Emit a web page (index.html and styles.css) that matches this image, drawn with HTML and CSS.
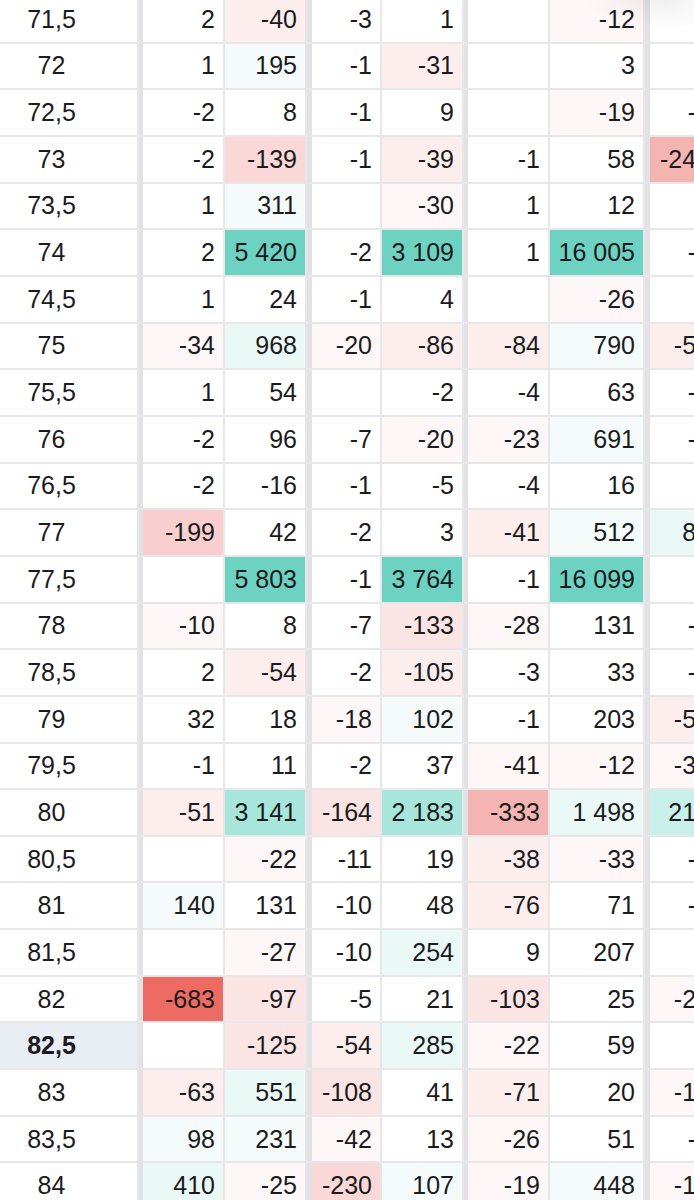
FILE: index.html
```html
<!DOCTYPE html>
<html lang="ru">
<head>
<meta charset="utf-8">
<title>Опционная доска</title>
<link rel="stylesheet" href="styles.css">
</head>
<body>
<div class="board">
  <div class="tbl">
    <div class="row"><div class="s">71,5</div><div class="c g4">2</div><div class="c r6">-40</div><div class="c n g5">-3</div><div class="c">1</div><div class="c g4"></div><div class="c w r7">-12</div><div class="c n g5"></div></div>
    <div class="row"><div class="s">72</div><div class="c g4">1</div><div class="c t5">195</div><div class="c n g5">-1</div><div class="c r6">-31</div><div class="c g4"></div><div class="c w">3</div><div class="c n g5"></div></div>
    <div class="row"><div class="s">72,5</div><div class="c g4">-2</div><div class="c">8</div><div class="c n g5">-1</div><div class="c">9</div><div class="c g4"></div><div class="c w r7">-19</div><div class="c n g5">-1</div></div>
    <div class="row"><div class="s">73</div><div class="c g4">-2</div><div class="c r4">-139</div><div class="c n g5">-1</div><div class="c r6">-39</div><div class="c g4">-1</div><div class="c w">58</div><div class="c n g5 r2">-241</div></div>
    <div class="row"><div class="s">73,5</div><div class="c g4">1</div><div class="c t5">311</div><div class="c n g5"></div><div class="c r7">-30</div><div class="c g4">1</div><div class="c w">12</div><div class="c n g5"></div></div>
    <div class="row"><div class="s">74</div><div class="c g4">2</div><div class="c t1">5 420</div><div class="c n g5">-2</div><div class="c t1">3 109</div><div class="c g4">1</div><div class="c w t1">16 005</div><div class="c n g5">-1</div></div>
    <div class="row"><div class="s">74,5</div><div class="c g4">1</div><div class="c">24</div><div class="c n g5">-1</div><div class="c">4</div><div class="c g4"></div><div class="c w r7">-26</div><div class="c n g5"></div></div>
    <div class="row"><div class="s">75</div><div class="c g4 r7">-34</div><div class="c t4">968</div><div class="c n g5 r7">-20</div><div class="c r6">-86</div><div class="c g4 r6">-84</div><div class="c w t5">790</div><div class="c n g5 r6">-52</div></div>
    <div class="row"><div class="s">75,5</div><div class="c g4">1</div><div class="c">54</div><div class="c n g5"></div><div class="c">-2</div><div class="c g4">-4</div><div class="c w">63</div><div class="c n g5">-1</div></div>
    <div class="row"><div class="s">76</div><div class="c g4">-2</div><div class="c">96</div><div class="c n g5">-7</div><div class="c r7">-20</div><div class="c g4 r7">-23</div><div class="c w t5">691</div><div class="c n g5">-2</div></div>
    <div class="row"><div class="s">76,5</div><div class="c g4">-2</div><div class="c">-16</div><div class="c n g5">-1</div><div class="c">-5</div><div class="c g4">-4</div><div class="c w">16</div><div class="c n g5"></div></div>
    <div class="row"><div class="s">77</div><div class="c g4 r3">-199</div><div class="c">42</div><div class="c n g5">-2</div><div class="c">3</div><div class="c g4 r6">-41</div><div class="c w t5">512</div><div class="c n g5 t4">84</div></div>
    <div class="row"><div class="s">77,5</div><div class="c g4"></div><div class="c t1">5 803</div><div class="c n g5">-1</div><div class="c t1">3 764</div><div class="c g4">-1</div><div class="c w t1">16 099</div><div class="c n g5"></div></div>
    <div class="row"><div class="s">78</div><div class="c g4 r7">-10</div><div class="c">8</div><div class="c n g5">-7</div><div class="c r5">-133</div><div class="c g4 r7">-28</div><div class="c w">131</div><div class="c n g5">-3</div></div>
    <div class="row"><div class="s">78,5</div><div class="c g4">2</div><div class="c r6">-54</div><div class="c n g5">-2</div><div class="c r6">-105</div><div class="c g4">-3</div><div class="c w">33</div><div class="c n g5">-1</div></div>
    <div class="row"><div class="s">79</div><div class="c g4">32</div><div class="c">18</div><div class="c n g5 r7">-18</div><div class="c t5">102</div><div class="c g4">-1</div><div class="c w">203</div><div class="c n g5 r6">-54</div></div>
    <div class="row"><div class="s">79,5</div><div class="c g4">-1</div><div class="c">11</div><div class="c n g5">-2</div><div class="c">37</div><div class="c g4 r7">-41</div><div class="c w r7">-12</div><div class="c n g5 r7">-37</div></div>
    <div class="row"><div class="s">80</div><div class="c g4 r6">-51</div><div class="c t2">3 141</div><div class="c n g5 r5">-164</div><div class="c t2">2 183</div><div class="c g4 r2">-333</div><div class="c w t4">1 498</div><div class="c n g5 t3">213</div></div>
    <div class="row"><div class="s">80,5</div><div class="c g4"></div><div class="c r7">-22</div><div class="c n g5">-11</div><div class="c">19</div><div class="c g4 r6">-38</div><div class="c w r7">-33</div><div class="c n g5">-2</div></div>
    <div class="row"><div class="s">81</div><div class="c g4 t5">140</div><div class="c">131</div><div class="c n g5">-10</div><div class="c">48</div><div class="c g4 r6">-76</div><div class="c w">71</div><div class="c n g5">-1</div></div>
    <div class="row"><div class="s">81,5</div><div class="c g4"></div><div class="c r7">-27</div><div class="c n g5">-10</div><div class="c t4">254</div><div class="c g4">9</div><div class="c w">207</div><div class="c n g5"></div></div>
    <div class="row"><div class="s">82</div><div class="c g4 r1">-683</div><div class="c r5">-97</div><div class="c n g5">-5</div><div class="c">21</div><div class="c g4 r5">-103</div><div class="c w">25</div><div class="c n g5 r7">-28</div></div>
    <div class="row"><div class="s cur">82,5</div><div class="c g4"></div><div class="c r5">-125</div><div class="c n g5 r6">-54</div><div class="c t4">285</div><div class="c g4 r7">-22</div><div class="c w">59</div><div class="c n g5"></div></div>
    <div class="row"><div class="s">83</div><div class="c g4 r6">-63</div><div class="c t4">551</div><div class="c n g5 r5">-108</div><div class="c">41</div><div class="c g4 r6">-71</div><div class="c w">20</div><div class="c n g5 r7">-17</div></div>
    <div class="row"><div class="s">83,5</div><div class="c g4 t5">98</div><div class="c t5">231</div><div class="c n g5 r7">-42</div><div class="c">13</div><div class="c g4 r7">-26</div><div class="c w">51</div><div class="c n g5">-4</div></div>
    <div class="row"><div class="s">84</div><div class="c g4 t4">410</div><div class="c r7">-25</div><div class="c n g5 r4">-230</div><div class="c t5">107</div><div class="c g4 r7">-19</div><div class="c w t5">448</div><div class="c n g5 r7">-15</div></div>
  </div>
  <div class="fade"></div>
</div>
</body>
</html>
```

FILE: styles.css
```css
html, body {
  margin: 0;
  padding: 0;
  background: #ffffff;
  overflow: hidden;
}

.board {
  position: relative;
  width: 694px;
  height: 1200px;
  overflow: hidden;
  font-family: "Liberation Sans", Arial, sans-serif;
  font-size: 25px;
  color: #1b1b1d;
}

.tbl {
  display: flex;
  flex-direction: column;
  gap: 2px;
  margin-top: -3px;
  width: 760px;
  background: #e7e7ea;
}

.row {
  display: flex;
  gap: 2px;
  height: 44.67px;
}

.s {
  box-sizing: border-box;
  flex: 0 0 137px;
  display: flex;
  align-items: center;
  justify-content: center;
  padding-right: 34px;
  background: #ffffff;
}

.s.cur {
  background: #e9eef5;
  font-weight: bold;
}

.c {
  box-sizing: border-box;
  flex: 0 0 80px;
  display: flex;
  align-items: center;
  justify-content: flex-end;
  padding-right: 8px;
  background: #ffffff;
  white-space: nowrap;
}

.c.n { flex-basis: 68px; }
.c.w { flex-basis: 93px; }

.c.g4 { flex-basis: 84px; border-left: 4px solid #e2e2e5; }
.c.g5 { flex-basis: 73px; border-left: 5px solid #e2e2e5; }

.t1 { background: #6dd2c2; }
.t2 { background: #a8e6dc; }
.t3 { background: #c9f0ea; }
.t4 { background: #eaf8f6; }
.t5 { background: #f5fbfb; }

.r1 { background: #ee6b64; }
.r2 { background: #f4b4b1; }
.r3 { background: #f8cfce; }
.r4 { background: #f9d8d7; }
.r5 { background: #fbe5e4; }
.r6 { background: #fdeeee; }
.r7 { background: #fef7f7; }

.fade {
  position: absolute;
  top: 0;
  right: 0;
  width: 110px;
  height: 30px;
  background: radial-gradient(ellipse at 70% 0%, rgba(0,0,0,0.06), rgba(0,0,0,0) 70%);
  pointer-events: none;
}
```
